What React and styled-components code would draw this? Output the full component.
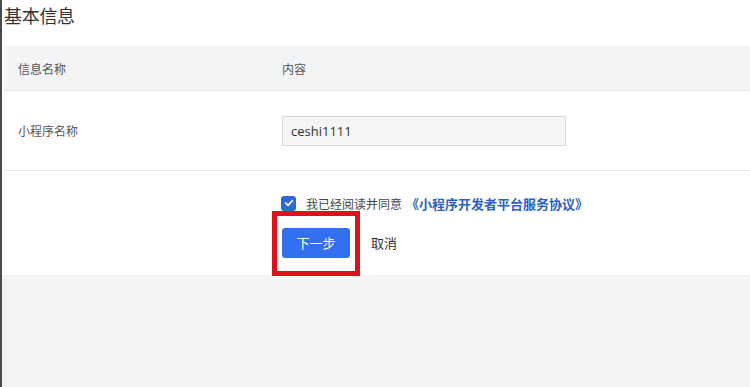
import React from 'react';
import styled, { createGlobalStyle } from 'styled-components';

const GlobalStyle = createGlobalStyle`
  html, body {
    margin: 0;
    padding: 0;
    background: #f2f3f5;
  }
  body {
    font-family: "Noto Sans CJK SC", "Liberation Sans", sans-serif;
    color: #333;
  }
`;

const Page = styled.div`
  width: 750px;
  height: 387px;
  display: flex;
  flex-direction: column;
  border-left: 2px solid #4a4a4a;
  box-sizing: border-box;
  background: #f2f3f5;
  overflow: hidden;
`;

const Panel = styled.div`
  background: #fff;
  padding-left: 2px;
  height: 275px;
  box-sizing: border-box;
`;

const Title = styled.h2`
  margin: 0;
  height: 46px;
  padding-top: 3px;
  box-sizing: border-box;
  font-size: 18px;
  font-weight: 400;
  line-height: 24px;
  color: #333;
  letter-spacing: -0.3px;
`;

const Row = styled.div`
  display: grid;
  grid-template-columns: 278px 1fr;
  align-items: center;
  height: ${p => p.$h}px;
  background: ${p => (p.$head ? '#f3f4f6' : '#fff')};
  border-bottom: 1px solid #e4e6ea;
  box-sizing: border-box;
`;

const Cell = styled.div`
  padding-left: ${p => p.$pl || 0}px;
  font-size: 12px;
  color: #555;
`;

const Input = styled.div`
  width: 284px;
  height: 30px;
  box-sizing: border-box;
  border: 1px solid #d9d9d9;
  background: #f5f5f5;
  padding-left: 8px;
  display: flex;
  align-items: center;
  font-family: "Open Sans", "Liberation Sans", sans-serif;
  font-size: 13px;
  color: #333;
`;

const Actions = styled.div`
  padding-left: 275px;
  padding-top: 21px;
  position: relative;
  z-index: 1;
`;

const Agree = styled.div`
  display: flex;
  align-items: center;
  gap: 10px;
  height: 22px;
  padding-left: 2px;
`;

const Check = styled.span`
  width: 15px;
  height: 15px;
  border-radius: 3px;
  background: #2e6ad6;
  display: flex;
  align-items: center;
  justify-content: center;
`;

const AgreeText = styled.span`
  font-size: 12px;
  color: #444;
`;

const Link = styled.span`
  font-size: 13px;
  font-weight: 700;
  color: #2a61c4;
  margin-left: -6px;
`;

const Buttons = styled.div`
  display: flex;
  align-items: center;
  margin-top: -3px;
`;

const Highlight = styled.div`
  border: 5px solid #e0101a;
  width: 88px;
  height: 65px;
  box-sizing: border-box;
  display: flex;
  align-items: center;
  justify-content: center;
  margin-left: -7px;
`;

const Primary = styled.button`
  width: 68px;
  height: 30px;
  border: none;
  border-radius: 3px;
  background: #3370f0;
  color: #fff;
  font-family: inherit;
  font-size: 13px;
  padding: 0;
  margin-top: -2px;
`;

const Ghost = styled.button`
  border: none;
  background: none;
  font-family: inherit;
  font-size: 13px;
  color: #333;
  margin-left: 11px;
  margin-top: -2px;
  padding: 0;
`;

export default function App() {
  return (
    <>
      <GlobalStyle />
      <Page>
        <Panel>
          <Title>基本信息</Title>
          <Row $head $h={45}>
            <Cell $pl={14}>信息名称</Cell>
            <Cell>内容</Cell>
          </Row>
          <Row $h={80}>
            <Cell $pl={14}>小程序名称</Cell>
            <Cell>
              <Input>ceshi1111</Input>
            </Cell>
          </Row>
          <Actions>
            <Agree>
              <Check>
                <svg width="10" height="10" viewBox="0 0 10 10">
                  <path d="M1.8 5.2 L4 7.3 L8.3 2.8" fill="none" stroke="#fff" strokeWidth="1.8" strokeLinecap="round" strokeLinejoin="round" />
                </svg>
              </Check>
              <AgreeText>我已经阅读并同意</AgreeText>
              <Link>《小程序开发者平台服务协议》</Link>
            </Agree>
            <Buttons>
              <Highlight>
                <Primary>下一步</Primary>
              </Highlight>
              <Ghost>取消</Ghost>
            </Buttons>
          </Actions>
        </Panel>
      </Page>
    </>
  );
}
